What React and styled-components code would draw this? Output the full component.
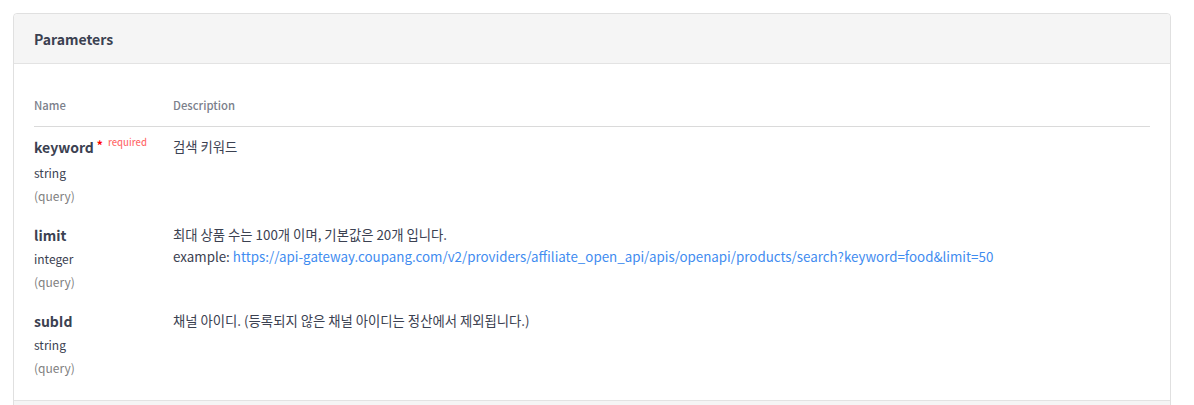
import React from 'react';
import styled, { createGlobalStyle } from 'styled-components';

const GlobalStyle = createGlobalStyle`
  body {
    margin: 0;
    background: #fff;
    font-family: "Noto Sans CJK KR", "Noto Sans", sans-serif;
    color: #3b4151;
  }
`;

const params = [
  { name: 'keyword', type: 'string', in: '(query)', required: true, desc: ['검색 키워드'] },
  {
    name: 'limit',
    type: 'integer',
    in: '(query)',
    desc: ['최대 상품 수는 100개 이며, 기본값은 20개 입니다.'],
    example: 'https://api-gateway.coupang.com/v2/providers/affiliate_open_api/apis/openapi/products/search?keyword=food&limit=50',
  },
  { name: 'subId', type: 'string', in: '(query)', desc: ['채널 아이디. (등록되지 않은 채널 아이디는 정산에서 제외됩니다.)'] },
];

const App = () => {
  return (
    <>
      <GlobalStyle />
      <Page>
        <Card>
          <CardHeader>
            <Title>Parameters</Title>
          </CardHeader>
          <CardBody>
            <Table>
              <thead>
                <tr>
                  <HeadCell $first>Name</HeadCell>
                  <HeadCell>Description</HeadCell>
                </tr>
              </thead>
              <tbody>
                {params.map((p) => (
                  <tr key={p.name}>
                    <NameCell>
                      <ParamName>
                        {p.name}
                        {p.required && (
                          <>
                            <Star>*</Star>
                            <Required>required</Required>
                          </>
                        )}
                      </ParamName>
                      <ParamType>{p.type}</ParamType>
                      <ParamIn>{p.in}</ParamIn>
                    </NameCell>
                    <DescCell>
                      {p.desc.map((d) => (
                        <div key={d}>{d}</div>
                      ))}
                      {p.example && (
                        <div>
                          example: <ExampleLink href="#">{p.example}</ExampleLink>
                        </div>
                      )}
                    </DescCell>
                  </tr>
                ))}
              </tbody>
            </Table>
          </CardBody>
          <NextSection />
        </Card>
      </Page>
    </>
  );
};

const Page = styled.div`
  padding: 13px 0 0 13px;
  height: 405px;
  box-sizing: border-box;
  overflow: hidden;
`;

const Card = styled.div`
  width: 1158px;
  border: 1px solid #e0e0e0;
  border-radius: 4px;
  box-sizing: border-box;
  background: #fff;
`;

const CardHeader = styled.div`
  height: 49px;
  display: flex;
  align-items: center;
  padding: 0 20px;
  background: #f5f5f5;
  border-bottom: 1px solid #e3e3e3;
  border-radius: 4px 4px 0 0;
`;

const Title = styled.h4`
  margin: 0;
  font-size: 14px;
  font-weight: 700;
  color: #3b4151;
  line-height: 20px;
`;

const CardBody = styled.div`
  padding: 20px 20px 13px;
`;

const Table = styled.table`
  width: 100%;
  border-collapse: collapse;
`;

const HeadCell = styled.th`
  text-align: left;
  padding: 11px 0;
  font-size: 11.3px;
  font-weight: 500;
  line-height: 20px;
  color: #7b808b;
  border-bottom: 1px solid #dadada;
  width: ${(p) => (p.$first ? '139px' : 'auto')};
`;

const NameCell = styled.td`
  vertical-align: top;
  padding: 10px 0 10px;
  width: 139px;
`;

const ParamName = styled.div`
  font-size: 14px;
  font-weight: 700;
  line-height: 20px;
  color: #3b4151;
`;

const Star = styled.span`
  color: #f00;
  font-size: 12px;
  margin-left: 3px;
  position: relative;
  top: -3px;
`;

const Required = styled.span`
  color: rgba(255, 0, 0, 0.6);
  font-size: 9.5px;
  font-weight: 500;
  margin-left: 5px;
  position: relative;
  top: -7px;
`;

const ParamType = styled.div`
  font-size: 12px;
  line-height: 18px;
  padding-top: 5px;
  color: #3b4151;
`;

const ParamIn = styled.div`
  font-size: 12px;
  line-height: 18px;
  padding-top: 5px;
  color: #808080;
`;

const DescCell = styled.td`
  vertical-align: top;
  padding: 9px 0 0;
  font-size: 13.35px;
  line-height: 22px;
  color: #3b4151;
`;

const ExampleLink = styled.a`
  color: #3f8cf0;
  text-decoration: none;
`;

const NextSection = styled.div`
  height: 20px;
  background: #f5f5f5;
  border-top: 1px solid #e3e3e3;
`;

export default App;
